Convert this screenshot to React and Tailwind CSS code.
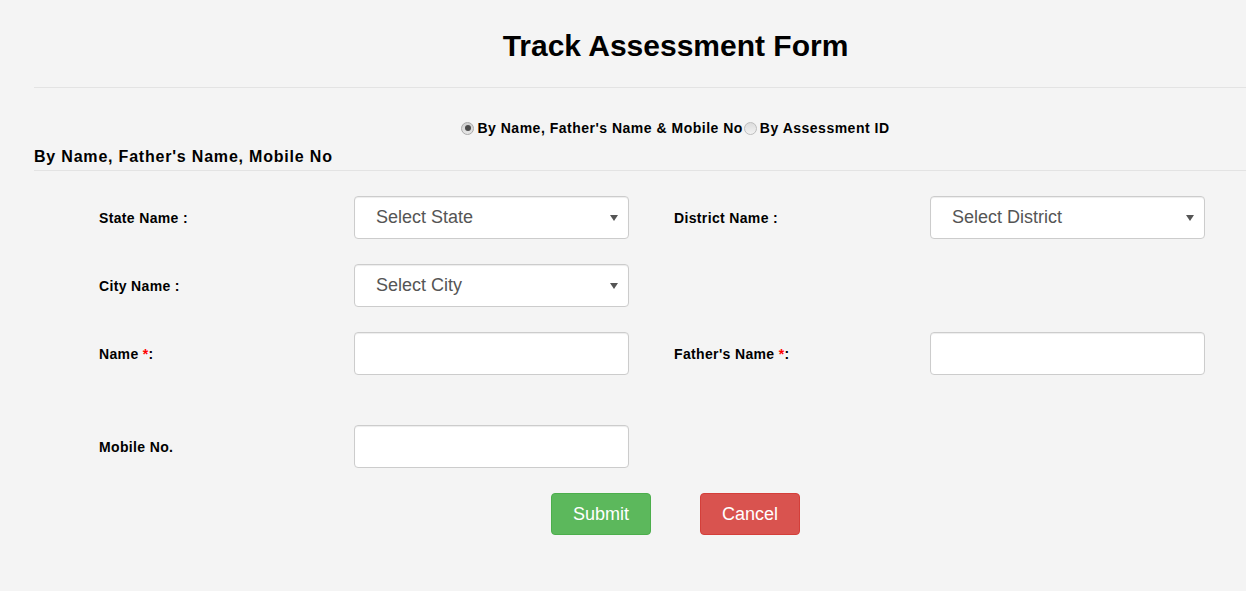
import React from "react";

function Radio({ checked }) {
  return checked ? (
    <span className="inline-flex h-[13px] w-[13px] shrink-0 items-center justify-center rounded-full border border-[#a9a9a9] bg-[linear-gradient(#d0d0d0,#e6e6e6)]">
      <span className="h-[6px] w-[6px] rounded-full bg-[#4a4a4a]" />
    </span>
  ) : (
    <span className="inline-block h-[13px] w-[13px] shrink-0 rounded-full border border-[#bdbdbd] bg-[linear-gradient(#dcdcdc,#f2f2f2)]" />
  );
}

function Select({ text }) {
  return (
    <div className="flex h-[43px] w-[275px] items-center justify-between rounded-[4px] border border-[#cccccc] bg-white pl-[21px] pr-[10px] shadow-[inset_0_1px_1px_rgba(0,0,0,0.075)]">
      <span className="text-[18px] text-[#555555]">{text}</span>
      <svg width="8" height="6" viewBox="0 0 8 6">
        <path d="M0 0 L8 0 L4 6 Z" fill="#555555" />
      </svg>
    </div>
  );
}

function Input() {
  return (
    <div className="h-[43px] w-[275px] rounded-[4px] border border-[#cccccc] bg-white shadow-[inset_0_1px_1px_rgba(0,0,0,0.075)]" />
  );
}

function Label({ children, w }) {
  return (
    <div className={`${w} pt-[2px] text-[14px] font-bold tracking-[0.35px] text-black`}>
      {children}
    </div>
  );
}

function Req() {
  return <span className="text-[#ff0000]">*</span>;
}

export default function App() {
  return (
    <div className="h-[591px] w-[1246px] overflow-hidden bg-[#f4f4f4] font-['Liberation_Sans',Arial,sans-serif] text-black">
      <div className="ml-[34px] w-[1283px]">
        <h2 className="pt-[29px] text-center text-[30px] font-bold leading-[33px]">
          Track Assessment Form
        </h2>
        <div className="mt-[25px] border-t border-[#e3e3e3]" />

        <div className="mt-[30px] flex h-[20px] items-center justify-center text-[14px] font-bold leading-[20px] tracking-[0.5px]">
          <Radio checked />
          <span className="ml-[3px]">By Name, Father's Name &amp; Mobile No</span>
          <span className="ml-[1px]" />
          <Radio />
          <span className="ml-[3px]">By Assessment ID</span>
        </div>

        <div className="mt-[8px] text-[16px] font-bold leading-[22px] tracking-[0.8px]">
          By Name, Father's Name, Mobile No
        </div>
        <div className="mt-[2px] border-t border-[#e3e3e3]" />

        <div className="pl-[65px]">
          <div className="mt-[25px] flex h-[43px] items-center">
            <Label w="w-[255px]">State Name :</Label>
            <Select text="Select State" />
            <div className="w-[45px]" />
            <Label w="w-[256px]">District Name :</Label>
            <Select text="Select District" />
          </div>

          <div className="mt-[25px] flex h-[43px] items-center">
            <Label w="w-[255px]">City Name :</Label>
            <Select text="Select City" />
          </div>

          <div className="mt-[25px] flex h-[43px] items-center">
            <Label w="w-[255px]">
              Name <Req />:
            </Label>
            <Input />
            <div className="w-[45px]" />
            <Label w="w-[256px]">
              Father's Name <Req />:
            </Label>
            <Input />
          </div>

          <div className="mt-[50px] flex h-[43px] items-center">
            <Label w="w-[255px]">Mobile No.</Label>
            <Input />
          </div>
        </div>

        <div className="mt-[25px] flex justify-center gap-[49px]">
          <button className="h-[42px] w-[100px] rounded-[4px] border border-[#4cae4c] bg-[#5cb85c] text-[18px] text-white">
            Submit
          </button>
          <button className="h-[42px] w-[100px] rounded-[4px] border border-[#d43f3a] bg-[#d9534f] text-[18px] text-white">
            Cancel
          </button>
        </div>
      </div>
    </div>
  );
}
